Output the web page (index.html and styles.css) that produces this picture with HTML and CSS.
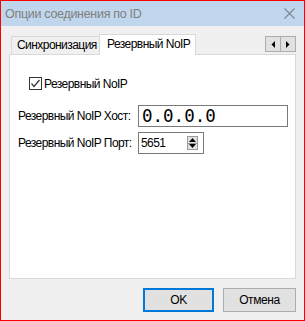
FILE: index.html
```html
<!DOCTYPE html>
<html>
<head>
<meta charset="utf-8">
<link rel="stylesheet" href="styles.css">
</head>
<body>
<div class="window">
  <div class="titlebar">
    <span class="title">Опции соединения по ID</span>
    <svg class="close" width="11" height="11" viewBox="0 0 11 11"><path d="M0.5 0.5 L10.5 10.5 M10.5 0.5 L0.5 10.5" stroke="#7b8794" stroke-width="1.1" fill="none"/></svg>
  </div>
  <div class="body">
    <div class="tabstrip">
      <div class="tab">Синхронизация</div>
      <div class="tab active">Резервный NoIP</div>
      <div class="tab-scroll">
        <span class="arrow-btn"><svg width="4" height="7" viewBox="0 0 4 7"><path d="M4 0 L4 7 L0.5 3.5 Z" fill="#000"/></svg></span>
        <span class="arrow-btn"><svg width="4" height="7" viewBox="0 0 4 7"><path d="M0 0 L0 7 L3.5 3.5 Z" fill="#000"/></svg></span>
      </div>
    </div>
    <div class="panel">
      <div class="check-row">
        <span class="checkbox"><svg width="11" height="11" viewBox="0 0 11 11"><path d="M1.5 5.5 L4 8.5 L9.5 2" stroke="#333" stroke-width="1.2" fill="none"/></svg></span>
        <span>Резервный NoIP</span>
      </div>
      <div class="form">
        <span class="label">Резервный NoIP Хост:</span>
        <div class="ip-input">0.0.0.0</div>
        <span class="label">Резервный NoIP Порт:</span>
        <div class="spin">
          <span class="spin-val">5651</span>
          <span class="spin-btns">
            <span class="spin-btn"><svg width="7" height="4" viewBox="0 0 7 4"><path d="M0 4 L7 4 L3.5 0 Z" fill="#000"/></svg></span>
            <span class="spin-btn"><svg width="7" height="4" viewBox="0 0 7 4"><path d="M0 0 L7 0 L3.5 4 Z" fill="#000"/></svg></span>
          </span>
        </div>
      </div>
    </div>
    <div class="buttons">
      <button class="btn default">OK</button>
      <button class="btn">Отмена</button>
    </div>
  </div>
</div>
</body>
</html>
```
FILE: styles.css
```css
html, body {
  margin: 0;
  padding: 0;
  background: #f0f0f0;
}
.window {
  width: 305px;
  height: 321px;
  box-sizing: border-box;
  border: 1px solid #ff0000;
  background: #f0f0f0;
  display: flex;
  flex-direction: column;
  font-family: "Liberation Sans", Arial, sans-serif;
  font-size: 12px;
  letter-spacing: -0.55px;
  color: #000;
  white-space: nowrap;
}
.titlebar {
  height: 25px;
  flex: none;
  background: #bfd6ec;
  display: flex;
  align-items: center;
  padding: 0 9px 0 4px;
}
.title {
  color: #7f7f7f;
  font-size: 12.5px;
  letter-spacing: -0.3px;
  flex: 1;
}
.close {
  display: block;
  margin-top: -1px;
}
.body {
  flex: 1;
  display: flex;
  flex-direction: column;
  padding: 8px 8px 0 8px;
}
.tabstrip {
  height: 20px;
  display: flex;
  align-items: flex-end;
  flex: none;
}
.tab {
  box-sizing: border-box;
  height: 18px;
  width: 88px;
  margin-left: 2px;
  border: 1px solid #d9d9d9;
  border-bottom: none;
  border-right: none;
  background: #f0f0f0;
  padding-left: 5px;
  line-height: 17px;
  overflow: hidden;
}
.tab.active {
  height: 21px;
  width: 97px;
  margin-left: 0;
  margin-bottom: -1px;
  background: #fff;
  border-right: 1px solid #d9d9d9;
  position: relative;
  z-index: 1;
  padding-left: 7px;
  line-height: 18px;
}
.tab-scroll {
  margin-left: auto;
  align-self: flex-start;
  margin-top: 2px;
  display: flex;
}
.arrow-btn {
  box-sizing: border-box;
  width: 16px;
  height: 16px;
  border: 1px solid #adadad;
  background: #e1e1e1;
  display: flex;
  align-items: center;
  justify-content: center;
}
.arrow-btn + .arrow-btn {
  width: 15px;
  border-left: none;
}
.arrow-btn svg { display: block; }
.panel {
  height: 225px;
  box-sizing: border-box;
  flex: none;
  background: #fff;
  border: 1px solid #d9d9d9;
  padding: 22px 8px 0 8px;
}
.check-row {
  display: flex;
  align-items: center;
  height: 13px;
  margin-left: 11px;
  gap: 2px;
}
.checkbox {
  box-sizing: border-box;
  width: 13px;
  height: 13px;
  border: 1px solid #333;
  background: #fff;
  display: flex;
  align-items: center;
  justify-content: center;
}
.checkbox svg { display: block; }
.form {
  margin-top: 15px;
  display: grid;
  grid-template-columns: 120px auto;
  row-gap: 5px;
  align-items: center;
  justify-items: start;
}
.ip-input {
  box-sizing: border-box;
  width: 150px;
  height: 22px;
  border: 1px solid #7a7a7a;
  background: #fff;
  font-family: "DejaVu Sans Mono", "Liberation Mono", monospace;
  font-size: 17.5px;
  letter-spacing: 0;
  line-height: 20px;
  padding-left: 3px;
}
.spin {
  box-sizing: border-box;
  width: 66px;
  height: 22px;
  border: 1px solid #7a7a7a;
  background: #fff;
  display: flex;
  align-items: center;
  padding-left: 2px;
  padding-right: 5px;
}
.spin-val { flex: 1; }
.spin-btns {
  box-sizing: border-box;
  width: 11px;
  height: 14px;
  border: 1px solid #9a9a9a;
  background: #e1e1e1;
  display: flex;
  flex-direction: column;
}
.spin-btn {
  flex: 1;
  display: flex;
  align-items: center;
  justify-content: center;
}
.spin-btn + .spin-btn { border-top: 1px solid #9a9a9a; }
.spin-btn svg { display: block; }
.buttons {
  margin-top: 9px;
  display: flex;
  justify-content: flex-end;
  gap: 9px;
}
.btn {
  box-sizing: border-box;
  height: 24px;
  width: 73px;
  border: 1px solid #adadad;
  background: #e1e1e1;
  font-family: "Liberation Sans", Arial, sans-serif;
  font-size: 12px;
  letter-spacing: -0.4px;
  color: #000;
  padding: 0;
  margin: 0;
}
.btn.default {
  width: 71px;
  border: 2px solid #0078d7;
}
```
